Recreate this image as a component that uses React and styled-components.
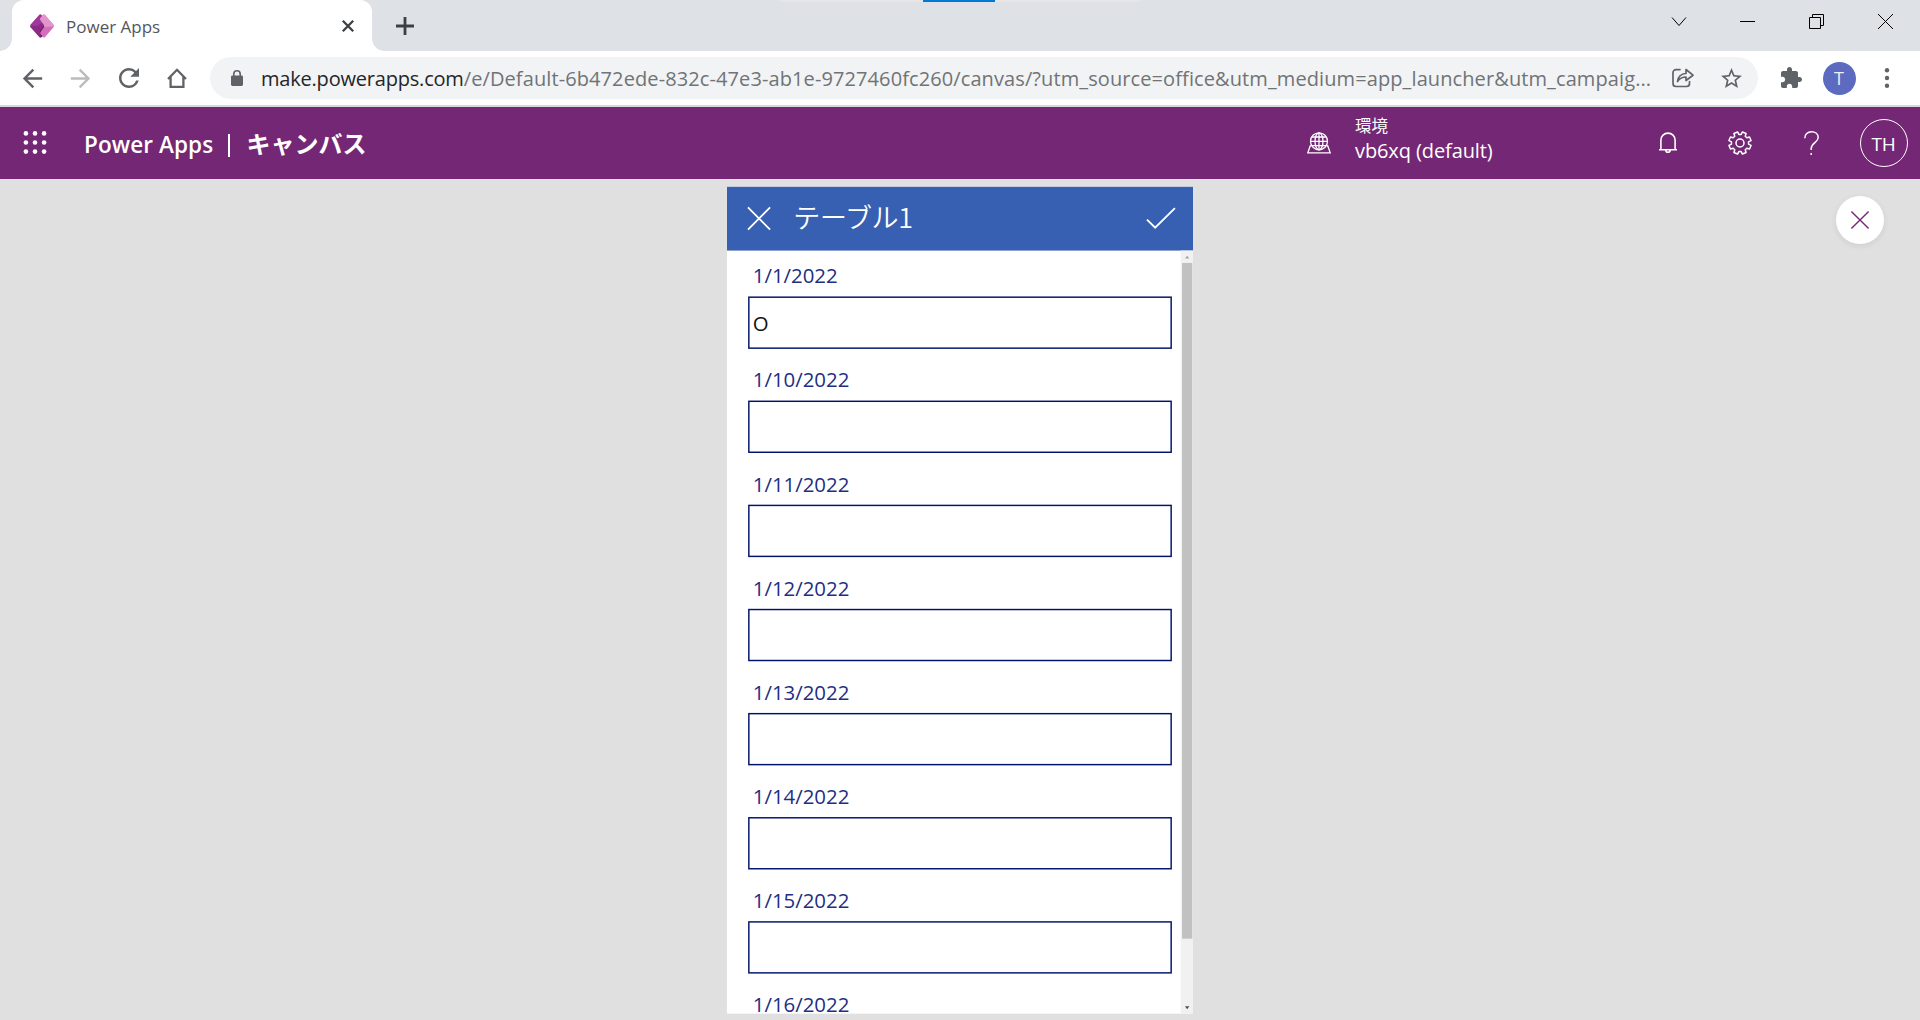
import React from "react";
import styled, { createGlobalStyle } from "styled-components";

const UI = `"Open Sans", "Noto Sans", "Noto Sans CJK JP", sans-serif`;
const SCALE = 466 / 640;

const Global = createGlobalStyle`
  * { box-sizing: border-box; }
  html, body { margin: 0; padding: 0; overflow: hidden; }
  body { font-family: ${UI}; background: #e0e0e0; }
  svg { display: block; flex: none; overflow: visible; }
`;

const Window = styled.div`
  position: relative;
  display: flex;
  flex-direction: column;
  width: 1920px;
  height: 1020px;
  overflow: hidden;
  background: #e0e0e0;
`;

/* ---------- browser chrome ---------- */
const TabStrip = styled.div`
  display: flex;
  flex: none;
  height: 51px;
  padding-left: 12px;
  background: #dee1e6;
`;

const Tab = styled.div`
  position: relative;
  display: flex;
  align-items: center;
  width: 360px;
  height: 51px;
  padding: 0 18px 0 18px;
  border-radius: 12px 12px 0 0;
  background: #fff;
  &::before, &::after {
    content: "";
    position: absolute;
    bottom: 0;
    width: 12px;
    height: 12px;
  }
  &::before {
    left: -12px;
    background: radial-gradient(circle at 0 0, transparent 11.5px, #fff 12px);
  }
  &::after {
    right: -12px;
    background: radial-gradient(circle at 100% 0, transparent 11.5px, #fff 12px);
  }
`;

const TabTitle = styled.span`
  flex: 1;
  margin: 2px 0 0 12px;
  font-size: 17px;
  line-height: 24px;
  white-space: nowrap;
  color: #54575b;
`;

const NewTab = styled.div`
  display: flex;
  align-items: center;
  margin-left: 24px;
`;

const Controls = styled.div`
  display: flex;
  align-items: flex-start;
  margin-left: auto;
`;

const Control = styled.div`
  display: flex;
  justify-content: center;
  width: 69px;
  padding-top: 14px;
`;

const LoadTrack = styled.div`
  position: absolute;
  top: 0;
  left: 779px;
  display: flex;
  justify-content: center;
  width: 362px;
  height: 2px;
  border-radius: 0 0 2px 2px;
  background: #e6e6e8;
`;

const LoadBar = styled.div`
  width: 72px;
  height: 2px;
  margin-right: 2px;
  background: #0078d7;
`;

const Toolbar = styled.div`
  display: flex;
  align-items: center;
  flex: none;
  height: 56px;
  padding: 0 9px;
  border-bottom: 2px solid #d6d8db;
  background: #fff;
`;

const Slot = styled.div`
  display: flex;
  align-items: center;
  justify-content: center;
  flex: none;
  width: ${(p) => p.$w || 48}px;
  height: 100%;
`;

const AddressBar = styled.div`
  display: flex;
  align-items: center;
  width: 1548px;
  height: 42px;
  margin: 0 9px;
  padding: 0 3px 0 21px;
  border-radius: 21px;
  background: #f1f3f4;
`;

const Url = styled.div`
  flex: 1;
  margin: 1px 0 0 18px;
  font-size: 20px;
  line-height: 28px;
  letter-spacing: ${(p) => p.$spacing}px;
  white-space: nowrap;
  color: #707377;
`;

const Host = styled.span`
  letter-spacing: ${(p) => p.$spacing}px;
  color: #242629;
`;

const Profile = styled.div`
  width: 33px;
  height: 33px;
  border-radius: 50%;
  background: #5c6bc0;
  color: #eef0fa;
  font-size: 18px;
  line-height: 33px;
  text-align: center;
`;

/* ---------- Power Apps header ---------- */
const Header = styled.header`
  display: flex;
  align-items: center;
  flex: none;
  height: 72px;
  background: #742774;
  color: #fff;
`;

const Title = styled.div`
  display: flex;
  align-items: center;
  flex: 1;
  margin: 3px 0 0 14px;
  font-size: 22.5px;
  font-weight: 600;
  line-height: 32px;
  white-space: nowrap;
`;

const Product = styled.span`
  width: 144px;
  letter-spacing: ${(p) => p.$spacing}px;
`;

const Divider = styled.span`
  width: 2px;
  height: 23px;
  margin: 2px 16.5px 0 0;
  background: #fff;
`;

const Section = styled.span`
  margin-top: -4px;
  font-family: "Noto Sans CJK JP", sans-serif;
  font-size: 24px;
  font-weight: 600;
`;

const Environment = styled.div`
  display: flex;
  align-items: center;
  width: 325px;
`;

const EnvText = styled.div`
  display: flex;
  flex-direction: column;
  margin: -5px 0 0 24px;
  white-space: nowrap;
`;

const EnvLabel = styled.span`
  margin-top: -2px;
  font-family: "Noto Sans CJK JP", sans-serif;
  font-size: 16.5px;
  line-height: 22px;
`;

const EnvName = styled.span`
  margin-top: 1px;
  font-size: 20px;
  line-height: 28px;
  letter-spacing: -0.1px;
`;

const Initials = styled.div`
  width: 48px;
  height: 48px;
  border: 1px solid #fff;
  border-radius: 50%;
  font-size: 19px;
  line-height: 48px;
  letter-spacing: -0.3px;
  text-align: center;
`;

/* ---------- app preview ---------- */
const Stage = styled.main`
  display: flex;
  flex: 1;
  justify-content: space-between;
  min-height: 0;
  padding: 7px 36px 0 727px;
`;

const PhoneFrame = styled.div`
  width: 466px;
  height: 827px;
`;

/* The app is authored on a 640 x 1136 canvas and scaled to fit. */
const Phone = styled.div`
  display: flex;
  flex-direction: column;
  width: 640px;
  height: 1136px;
  overflow: hidden;
  transform: translateY(0.5px) scale(${SCALE});
  transform-origin: 0 0;
  background: #fff;
`;

const AppBar = styled.div`
  display: flex;
  align-items: center;
  flex: none;
  height: 88px;
  padding: 0 24px 0 28px;
  background: #3860b2;
  color: #fff;
`;

const AppTitle = styled.div`
  flex: 1;
  margin: -6px 0 0 31px;
  font-family: "Noto Sans CJK JP", sans-serif;
  font-size: 37px;
  font-weight: 350;
  line-height: 48px;
  letter-spacing: ${(p) => p.$spacing}px;
`;

const Content = styled.div`
  display: flex;
  flex: 1;
  min-height: 0;
`;

const Form = styled.div`
  flex: 1;
  padding: 0 12px 0 29.4px;
  overflow: hidden;
`;

const Card = styled.div`
  height: 143px;
`;

const Label = styled.div`
  height: 62.7px;
  padding: 15.3px 0 0 6px;
  font-size: 28px;
  line-height: 38px;
  color: #1e2e84;
`;

const Field = styled.div`
  width: 582px;
  height: 72px;
  padding: 1px 3px 0 4px;
  border: 2px solid #00126b;
  font-size: 28px;
  line-height: 68px;
  color: #111;
`;

const Scrollbar = styled.div`
  display: flex;
  flex-direction: column;
  align-items: center;
  width: 17px;
  background: #f1f1f1;
`;

const ScrollArrow = styled.div`
  display: flex;
  align-items: center;
  justify-content: center;
  flex: none;
  width: 17px;
  height: 17px;
`;

const Thumb = styled.div`
  width: 14px;
  height: 928px;
  background: #c1c1c1;
`;

const Spacer = styled.div`
  flex: 1;
`;

const CloseButton = styled.div`
  display: flex;
  align-items: center;
  justify-content: center;
  width: 48px;
  height: 48px;
  margin-top: 10px;
  border-radius: 50%;
  background: #fff;
  box-shadow: 0 2px 6px rgba(0, 0, 0, 0.08);
`;

/* ---------- icons ---------- */
const GREY = "#5f6368";

const Glyph = ({ size, d, color = GREY }) => (
  <svg width={size} height={size} viewBox="0 0 24 24" fill={color}>
    <path d={d} />
  </svg>
);

const Line = ({ w, h, d, color = "#fff", sw = 1.5, cap = "butt", join = "miter", children }) => (
  <svg width={w} height={h} viewBox={`0 0 ${w} ${h}`} fill="none" stroke={color}
    strokeWidth={sw} strokeLinecap={cap} strokeLinejoin={join}>
    <path d={d} />
    {children}
  </svg>
);

const BACK = "M20 11H7.83l5.59-5.59L12 4l-8 8 8 8 1.41-1.41L7.83 13H20v-2z";
const FORWARD = "M12 4l-1.41 1.41L16.17 11H4v2h12.17l-5.58 5.59L12 20l8-8z";
const RELOAD =
  "M17.65 6.35A7.96 7.96 0 0 0 12 4c-4.42 0-7.99 3.58-7.99 8s3.57 8 7.99 8c3.73 0 6.84-2.55 7.73-6h-2.08A5.99 5.99 0 0 1 12 18c-3.31 0-6-2.69-6-6s2.69-6 6-6c1.66 0 3.14.69 4.22 1.78L13 11h7V4z";
const PUZZLE =
  "M20.5 11H19V7c0-1.1-.9-2-2-2h-4V3.5C13 2.12 11.88 1 10.5 1S8 2.12 8 3.5V5H4c-1.1 0-1.99.9-1.99 2v3.8H3.5c1.49 0 2.7 1.21 2.7 2.7s-1.21 2.7-2.7 2.7H2V20c0 1.1.9 2 2 2h3.8v-1.5c0-1.49 1.21-2.7 2.7-2.7s2.7 1.21 2.7 2.7V22H17c1.1 0 2-.9 2-2v-4h1.5c1.38 0 2.5-1.12 2.5-2.5S21.88 11 20.5 11z";
const STAR =
  "M22 9.24l-7.19-.62L12 2 9.19 8.63 2 9.24l5.46 4.73L5.82 21 12 17.27 18.18 21l-1.63-7.03L22 9.24zM12 15.4l-3.76 2.27 1-4.28-3.32-2.88 4.38-.38L12 6.1l1.71 4.04 4.38.38-3.32 2.88 1 4.28L12 15.4z";

const Logo = () => (
  <svg width="24" height="24" viewBox="0 0 24 24">
    <path d="M9.5.8Q10.4 0 11.2.8L14 3.8 16 12 11 23.4Q10.2 24 9.4 23.2L.5 13.2Q-.3 12 .5 10.8z" fill="#8b2a86" />
    <path d="M9.5.8Q10.4 0 11.2.8L13.6 8 7 12 .2 11.4z" fill="#a0379a" />
    <path d="M10 17l4-5 2 8-5 3.4z" fill="#5b1a5c" />
    <path d="M13.2.8Q14 0 14.8.8L23.5 10.8Q24.3 12 23.5 13.2L14.8 23.2Q14 24 13.2 23.2L10.6 20Q9.8 19 10.6 18L14 13Q14.7 12 14 11L10.4 6Q9.8 5 10.4 4z" fill="#d66dbb" />
    <path d="M14.8.8L23.5 10.8Q24.3 12 23.5 12.6L15 13 14 11 10.4 6Q9.8 5 10.4 4L13.2.8Q14 0 14.8.8z" fill="#e295cd" />
  </svg>
);

const gearPath = (() => {
  const pts = [];
  for (let i = 0; i < 8; i++) {
    const c = 22.5 + i * 45;
    [[-15, 8.6], [-10, 11.3], [10, 11.3], [15, 8.6]].forEach(([o, r]) => {
      const a = ((c + o) * Math.PI) / 180;
      pts.push(`${(12 + r * Math.cos(a)).toFixed(2)} ${(12 + r * Math.sin(a)).toFixed(2)}`);
    });
  }
  return `M${pts.join("L")}Z`;
})();

const Waffle = () => (
  <svg width="24" height="24" viewBox="0 0 24 24" fill="#fff">
    {[2.4, 11.5, 20.6].map((y) => [2.9, 12, 21.1].map((x) => <circle key={`${x}-${y}`} cx={x} cy={y} r="2.3" />))}
  </svg>
);

const labels = ["1/1/2022", "1/10/2022", "1/11/2022", "1/12/2022", "1/13/2022", "1/14/2022", "1/15/2022", "1/16/2022"];

export default function App() {
  return (
    <Window>
      <Global />
      <TabStrip>
        <Tab>
          <Logo />
          <TabTitle>Power Apps</TabTitle>
          <Line w={12} h={12} d="M.8.8l10.4 10.4M11.2.8L.8 11.2" color="#3c4043" sw={2.3} />
        </Tab>
        <NewTab>
          <Line w={18} h={18} d="M9 0v18M0 9h18" color="#3c4043" sw={2.8} />
        </NewTab>
        <Controls>
          <Control><Line w={15} h={15} d="M1 3.5l7 8 7-8" color="#000" sw={1} /></Control>
          <Control><Line w={15} h={15} d="M0 7.5h15" color="#000" sw={1} /></Control>
          <Control><Line w={15} h={15} d="M.5 3.5h11v11H.5zM3.5 3.5v-3h11v11h-3" color="#000" sw={1} /></Control>
          <Control><Line w={15} h={15} d="M0 0l15 15M15 0L0 15" color="#000" sw={1} /></Control>
        </Controls>
      </TabStrip>
      <LoadTrack><LoadBar /></LoadTrack>

      <Toolbar>
        <Slot $w={47}><Glyph size={29} d={BACK} /></Slot>
        <Slot $w={49}><Glyph size={29} d={FORWARD} color="#babcbe" /></Slot>
        <Slot><Glyph size={30} d={RELOAD} /></Slot>
        <Slot><Line w={20} h={20} d="M1 11L10 1.8 19 11M3.6 9v9.8h12.8V9" color={GREY} sw={2.3} /></Slot>
        <AddressBar>
          <svg width="12" height="16" viewBox="0 0 12 16">
            <rect x="0" y="5.6" width="12" height="10.4" rx="1.4" fill={GREY} />
            <path d="M2.8 6.5V4a3.2 3.2 0 0 1 6.4 0v2.5" fill="none" stroke={GREY} strokeWidth="1.6" />
          </svg>
          <Url $spacing={0.1}>
            <Host $spacing={-0.2}>make.powerapps.com</Host>
            /e/Default-6b472ede-832c-47e3-ab1e-9727460fc260/canvas/?utm_source=office&amp;utm_medium=app_launcher&amp;utm_campaig...
          </Url>
          <Slot>
            <Line w={22} h={20} color={GREY} sw={1.7} cap="round" join="round"
              d="M8 1.6H4A3 3 0 0 0 1 4.600V15.500A3 3 0 0 0 4 18.500H14.500A3 3 0 0 0 17.500 15.500V13.500M5.500 13.500C6.200 8 9 5.800 14 5.500V1.500L21 7.200 14 12.500V9C10 9 7.500 10.500 5.500 13.500z" />
          </Slot>
          <Slot><Glyph size={25} d={STAR} /></Slot>
        </AddressBar>
        <Slot><Glyph size={24} d={PUZZLE} /></Slot>
        <Slot><Profile>T</Profile></Slot>
        <Slot>
          <svg width="6" height="20" viewBox="0 0 6 20" fill={GREY}>
            <circle cx="3" cy="2.300" r="2.200" /><circle cx="3" cy="10" r="2.200" /><circle cx="3" cy="17.700" r="2.200" />
          </svg>
        </Slot>
      </Toolbar>

      <Header>
        <Slot $w={70}><Waffle /></Slot>
        <Title>
          <Product $spacing={0.1}>Power Apps</Product>
          <Divider />
          <Section>キャンバス</Section>
        </Title>
        <Environment>
          <Line w={24} h={22} sw={1.3}
            d="M4 14H3.200L.8 20.900H23.200L20.800 14H20M12 .8v17M3 9.300h18M4.600 5h14.800M4.600 13.600h14.800">
            <circle cx="12" cy="9.300" r="8.500" />
            <ellipse cx="12" cy="9.300" rx="4" ry="8.500" />
          </Line>
          <EnvText>
            <EnvLabel>環境</EnvLabel>
            <EnvName>vb6xq (default)</EnvName>
          </EnvText>
        </Environment>
        <Slot $w={72}><Line w={18} h={22} sw={1.6} d="M0 17.700H18M1.900 17.700V8.200a7.100 7.100 0 0 1 14.200 0v9.500M6.700 18a2.300 2.300 0 0 0 4.600 0" /></Slot>
        <Slot $w={72}>
          <Line w={24} h={24} sw={1.5} d={gearPath} join="round"><circle cx="12" cy="12" r="4" /></Line>
        </Slot>
        <Slot $w={71}>
          <Line w={15} h={24} sw={1.5} d="M.8 7.200C.8 3.200 3.600.8 7.500.8S14.200 3.200 14.200 6.600C14.200 11.400 7.200 12 7.200 17.500V19M7.200 22v2" />
        </Slot>
        <Slot $w={73}><Initials>TH</Initials></Slot>
      </Header>

      <Stage>
        <PhoneFrame>
          <Phone>
            <AppBar>
              <Line w={32} h={32} sw={2.500} d="M.8.8l30.400 30.400M31.200.8L.8 31.200" />
              <AppTitle $spacing={-0.4}>テーブル1</AppTitle>
              <Line w={40} h={30} sw={2.600} d="M.8 16.500L12 27.700 39.200.8" />
            </AppBar>
            <Content>
              <Form>
                {labels.map((label, i) => (
                  <Card key={label}>
                    <Label>{label}</Label>
                    <Field>{i === 0 ? "O" : ""}</Field>
                  </Card>
                ))}
              </Form>
              <Scrollbar>
                <ScrollArrow><svg width="6" height="4" viewBox="0 0 6 4"><path d="M0 4l3-4 3 4z" fill="#a3a3a3" /></svg></ScrollArrow>
                <Thumb />
                <Spacer />
                <ScrollArrow><svg width="6" height="4" viewBox="0 0 6 4"><path d="M0 0l3 4 3-4z" fill="#505050" /></svg></ScrollArrow>
              </Scrollbar>
            </Content>
          </Phone>
        </PhoneFrame>
        <CloseButton>
          <Line w={18} h={18} d="M.4.4l17.200 17.200M17.600.4L.4 17.600" color="#742774" sw={1.400} />
        </CloseButton>
      </Stage>
    </Window>
  );
}
